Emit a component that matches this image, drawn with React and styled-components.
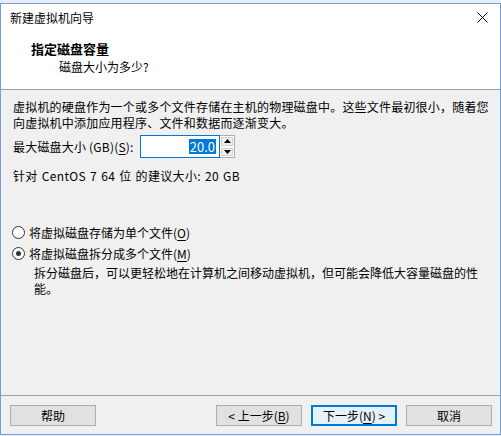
import React from 'react';
import styled, { createGlobalStyle, css } from 'styled-components';

const GlobalStyle = createGlobalStyle`
  html, body {
    margin: 0;
    padding: 0;
    background: #dfe7f0;
  }
  body {
    font-family: "Noto Sans CJK SC", "Noto Sans", sans-serif;
    font-size: 12px;
    color: #000;
  }
`;

const Backdrop = styled.div`
  width: 501px;
  height: 436px;
  padding-top: 3px;
  box-sizing: border-box;
  background: #e9eef4;
`;

const Window = styled.div`
  width: 501px;
  height: 432px;
  box-sizing: border-box;
  border: 1px solid #6f9fd6;
  background: #f0f0f0;
  display: flex;
  flex-direction: column;
`;

const TitleBar = styled.div`
  height: 27px;
  flex-shrink: 0;
  background: #fff;
  display: flex;
  align-items: center;
  justify-content: space-between;
  padding: 0 12px 0 9px;
  line-height: 16px;
`;

const CloseBtn = styled.div`
  width: 12px;
  height: 12px;
  display: flex;
  align-items: center;
  justify-content: center;
`;

const Header = styled.div`
  flex-shrink: 0;
  background: #fff;
  box-sizing: border-box;
  padding: 10px 0 0 30px;
  border-bottom: 1px solid #a0a0a0;
  height: 59px;
`;

const HeaderTitle = styled.div`
  font-weight: bold;
  font-size: 13px;
  line-height: 16px;
`;

const HeaderSub = styled.div`
  margin: 2px 0 0 28px;
  line-height: 16px;
`;

const Body = styled.div`
  flex: 1;
  padding: 9px 0 0 12px;
  border-bottom: 1px solid #a0a0a0;
  overflow: hidden;
`;

const Para = styled.p`
  margin: 0;
  line-height: 16px;
  letter-spacing: ${(p) => p.$spacing || 0}px;
  white-space: nowrap;
`;

const SizeRow = styled.div`
  margin-top: 4px;
  height: 23px;
  display: flex;
  align-items: center;
`;

const Label = styled.span`
  width: 127px;
  line-height: 16px;
  letter-spacing: 0.2px;
  white-space: nowrap;
`;

const Spin = styled.div`
  display: flex;
  height: 23px;
`;

const NumBox = styled.div`
  width: 80px;
  box-sizing: border-box;
  border: 1px solid #0078d7;
  background: #fff;
  display: flex;
  align-items: center;
  justify-content: flex-end;
  padding-right: 3px;
`;

const Selected = styled.span`
  background: #0078d7;
  color: #fff;
  font-size: 13px;
  line-height: 15px;
  padding: 0 1px;
`;

const Arrows = styled.div`
  width: 15px;
  display: flex;
  flex-direction: column;
  border: 1px solid #adadad;
  border-left: none;
  box-sizing: border-box;
  background: #fff;
`;

const ArrowBtn = styled.div`
  flex: 1;
  margin: 1px;
  background: #efefef;
  border: 1px solid #d0d0d0;
  display: flex;
  align-items: center;
  justify-content: center;
`;

const Hint = styled.div`
  margin-top: 10px;
  line-height: 16px;
  letter-spacing: 0.35px;
  word-spacing: 1px;
`;

const Options = styled.div`
  margin-top: 40px;
  display: flex;
  flex-direction: column;
  gap: 5px;
`;

const RadioRow = styled.div`
  display: flex;
  align-items: center;
  height: 16px;
  gap: 4px;
  margin-left: -1px;
`;

const RadioDot = styled.span`
  width: 13px;
  height: 13px;
  box-sizing: border-box;
  border-radius: 50%;
  border: 1px solid #333;
  background: #fff;
  display: flex;
  align-items: center;
  justify-content: center;
  ${(p) =>
    p.$checked &&
    css`
      &::after {
        content: '';
        width: 5px;
        height: 5px;
        border-radius: 50%;
        background: #333;
      }
    `}
`;

const Desc = styled.div`
  margin: 4px 0 0 21px;
  line-height: 16px;
  white-space: nowrap;
`;

const Key = styled.span`
  text-decoration: underline;
  text-underline-offset: 2px;
`;

const Footer = styled.div`
  height: 38px;
  flex-shrink: 0;
  display: flex;
  align-items: flex-start;
  padding: 9px 8px 0 9px;
  box-sizing: border-box;
  gap: 9px;
`;

const Button = styled.div`
  width: 86px;
  height: 21px;
  box-sizing: border-box;
  background: #e1e1e1;
  border: 1px solid #adadad;
  display: flex;
  align-items: center;
  justify-content: center;
  line-height: 16px;
  ${(p) =>
    p.$primary &&
    css`
      border-color: #0078d7;
      box-shadow: inset 0 0 0 1px #0078d7;
      background: #e5f1fb;
    `}
`;

const Spacer = styled.div`
  flex: 1;
`;

export default function App() {
  return (
    <>
      <GlobalStyle />
      <Backdrop>
        <Window>
          <TitleBar>
            <span>新建虚拟机向导</span>
            <CloseBtn>
              <svg width="11" height="11" viewBox="0 0 11 11">
                <path d="M0.5 0.5 L10.5 10.5 M10.5 0.5 L0.5 10.5" stroke="#000" strokeWidth="1" />
              </svg>
            </CloseBtn>
          </TitleBar>
          <Header>
            <HeaderTitle>指定磁盘容量</HeaderTitle>
            <HeaderSub>磁盘大小为多少?</HeaderSub>
          </Header>
          <Body>
            <Para $spacing={0.2}>虚拟机的硬盘作为一个或多个文件存储在主机的物理磁盘中。这些文件最初很小，随着您</Para>
            <Para $spacing={0.2}>向虚拟机中添加应用程序、文件和数据而逐渐变大。</Para>
            <SizeRow>
              <Label>
                最大磁盘大小 (GB)(<Key>S</Key>):
              </Label>
              <Spin>
                <NumBox>
                  <Selected>20.0</Selected>
                </NumBox>
                <Arrows>
                  <ArrowBtn>
                    <svg width="7" height="4" viewBox="0 0 7 4">
                      <path d="M0 4 L3.5 0 L7 4 Z" fill="#000" />
                    </svg>
                  </ArrowBtn>
                  <ArrowBtn>
                    <svg width="7" height="4" viewBox="0 0 7 4">
                      <path d="M0 0 L3.5 4 L7 0 Z" fill="#000" />
                    </svg>
                  </ArrowBtn>
                </Arrows>
              </Spin>
            </SizeRow>
            <Hint>针对 CentOS 7 64 位 的建议大小: 20 GB</Hint>
            <Options>
              <RadioRow>
                <RadioDot />
                <span>
                  将虚拟磁盘存储为单个文件(<Key>O</Key>)
                </span>
              </RadioRow>
              <RadioRow>
                <RadioDot $checked />
                <span>
                  将虚拟磁盘拆分成多个文件(<Key>M</Key>)
                </span>
              </RadioRow>
            </Options>
            <Desc>
              拆分磁盘后，可以更轻松地在计算机之间移动虚拟机，但可能会降低大容量磁盘的性
              <br />
              能。
            </Desc>
          </Body>
          <Footer>
            <Button>帮助</Button>
            <Spacer />
            <Button>
              &lt; 上一步(<Key>B</Key>)
            </Button>
            <Button $primary>
              下一步(<Key>N</Key>) &gt;
            </Button>
            <Button>取消</Button>
          </Footer>
        </Window>
      </Backdrop>
    </>
  );
}
